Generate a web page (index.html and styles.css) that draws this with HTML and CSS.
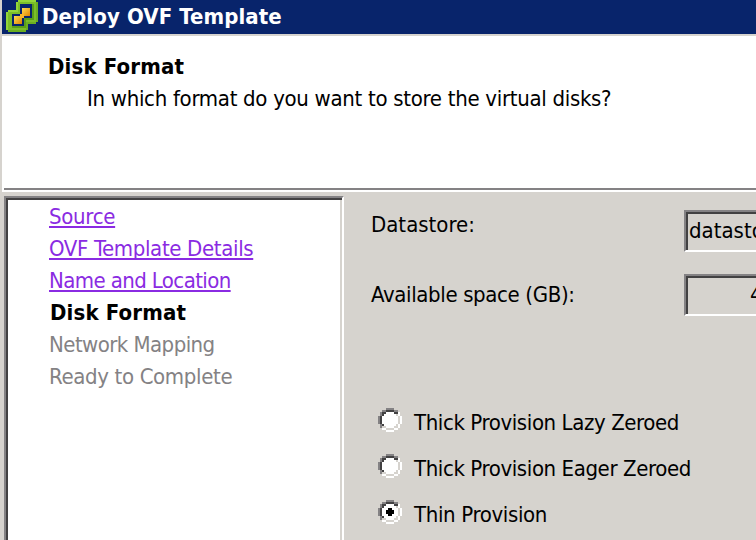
FILE: index.html
```
<!DOCTYPE html>
<html lang="en">
<head>
  <meta charset="UTF-8">
  <title>Deploy OVF Template</title>
  <link rel="stylesheet" href="styles.css">
</head>
<body>
  <div class="window">
    <div class="titlebar">
      <svg class="logo" viewBox="0 0 16 16" width="32" height="32" shape-rendering="crispEdges">
        <defs>
          <linearGradient id="gold" x1="0" y1="0" x2="1" y2="1">
            <stop offset="0" stop-color="#ffdb52"/>
            <stop offset="1" stop-color="#de8200"/>
          </linearGradient>
        </defs>
        <path fill="#6bae21" d="M6 0h9v1h1v10h-1v1h-4v3h-1v1H1v-1H0V6h1V5h4V1h1z"/>
        <path fill="#94d639" d="M6 0h9v1h-9v5H1v9H0V6h1V5h4V1h1z"/>
        <path fill="#7bbe29" d="M6 1h9v10h-5v4H1V6h5z"/>
        <path fill="#5a9e18" d="M7 2h7v8h-4v4H3V7h4z"/>
        <path fill="#08246b" d="M7 2h6v7H9v4H3V7h4z"/>
        <path fill="url(#gold)" d="M8 4h4v4H8z"/>
        <path fill="url(#gold)" d="M4 8h4v4H4z"/>
        <path fill="#f7b629" d="M7 7h2v2H7z"/>
      </svg>
      <span class="title">Deploy OVF Template</span>
    </div>
    <div class="header">
      <h1>Disk Format</h1>
      <p class="question">In which format do you want to store the virtual disks?</p>
    </div>
    <div class="content">
      <ul class="steps">
        <li><a class="source" href="#">Source</a></li>
        <li><a class="details" href="#">OVF Template Details</a></li>
        <li><a class="location" href="#">Name and Location</a></li>
        <li class="current">Disk Format</li>
        <li class="pending mapping">Network Mapping</li>
        <li class="pending ready">Ready to Complete</li>
      </ul>
      <div class="form">
        <div class="row">
          <label class="datastore">Datastore:</label>
          <div class="field">datastore1</div>
        </div>
        <div class="row">
          <label class="space">Available space (GB):</label>
          <div class="field number">4</div>
        </div>
        <div class="options">
          <div class="option">
            <svg class="radio" viewBox="0 0 12 12" width="24" height="24"><use href="#radio"/></svg>
            <span class="lazy">Thick Provision Lazy Zeroed</span>
          </div>
          <div class="option">
            <svg class="radio" viewBox="0 0 12 12" width="24" height="24"><use href="#radio"/></svg>
            <span class="eager">Thick Provision Eager Zeroed</span>
          </div>
          <div class="option">
            <svg class="radio" viewBox="0 0 12 12" width="24" height="24"><use href="#radio"/><path d="M5 4h2v1h1v2H7v1H5V7H4V5h1z"/></svg>
            <span class="thin">Thin Provision</span>
          </div>
        </div>
      </div>
    </div>
  </div>

  <svg width="0" height="0" class="symbols">
    <symbol id="radio" viewBox="0 0 12 12">
      <path fill="#fff" d="M4 2h4v1h1v1h1v4H9v1H8v1H4V9H2V4h1V3h1z"/>
      <path fill="#848284" d="M4 0h4v1H4zM2 1h2v1H2zM8 1h2v1H8zM1 2h1v2H1zM0 4h1v4H0zM1 8h1v2H1z"/>
      <path fill="#424142" d="M4 1h4v1H4zM2 2h2v1H2zM8 2h2v1H8zM2 3h1v1H2zM1 4h1v4H1zM2 8h1v1H2z"/>
      <path fill="#d6d3ce" d="M9 3h1v1H9zM10 4h1v4h-1zM9 8h1v1H9zM8 9h2v1H8zM4 10h4v1H4zM2 9h2v1H2z"/>
      <path fill="#fff" d="M10 2h1v2h-1zM11 4h1v4h-1zM10 8h1v2h-1zM8 10h2v1H8zM2 10h2v1H2zM4 11h4v1H4zM3 3h1v1H3z"/>
    </symbol>
  </svg>
</body>
</html>
```

FILE: styles.css
```
* {
  box-sizing: border-box;
}
body {
  margin: 0;
  overflow: hidden;
  font-family: "DejaVu Sans Condensed", "DejaVu Sans", sans-serif;
  font-stretch: condensed;
  font-size: 22px;
  line-height: 32px;
  color: #000;
  background-color: #d6d3ce;
}
.window {
  width: 756px;
  height: 540px;
  padding-left: 2px;
  overflow: hidden;
  white-space: nowrap;
}
.titlebar {
  display: flex;
  height: 36px;
  padding-left: 4px;
  background-color: #08246b;
  border-bottom: 2px solid #d6d3ce;
  color: #fff;
  font-weight: bold;
}
.title {
  margin: 1px 0 0 4px;
  letter-spacing: 0.1px;
}
.header {
  height: 156px;
  padding: 15px 0 0 2px;
  background-color: #fff;
  display: flex;
  flex-direction: column;
}
.header::after {
  content: "";
  height: 2px;
  margin-top: auto;
  margin-bottom: 2px;
  background-color: #848284;
}
h1 {
  margin: 0 0 0 44px;
  font-size: 22px;
  letter-spacing: 0.15px;
}
.question {
  margin: 0 0 0 83px;
  letter-spacing: -0.3px;
}
.content {
  display: flex;
  padding: 4px 0 0 2px;
}
.steps {
  flex: none;
  width: 340px;
  height: 360px;
  margin: 0;
  padding: 3px 0 0 43px;
  list-style: none;
  background-color: #fff;
  border: 2px solid #848284;
  border-right-color: #fff;
  box-shadow: inset 2px 2px #424142, inset -2px 0 #d6d3ce;
}
.steps a {
  color: #8a2be2;
  text-decoration-thickness: 2px;
  text-decoration-skip-ink: none;
  text-underline-offset: 2px;
}
.source {
  letter-spacing: -0.3px;
}
.details {
  letter-spacing: -0.35px;
}
.location {
  letter-spacing: -0.6px;
}
.current {
  padding-left: 1px;
  font-weight: bold;
  letter-spacing: 0.15px;
}
.pending {
  color: #848284;
}
.mapping {
  letter-spacing: -0.55px;
}
.ready {
  letter-spacing: -0.35px;
}
.form {
  flex: 1;
  padding: 14px 0 0 27px;
}
.row {
  display: flex;
  height: 42px;
  margin-bottom: 22px;
}
.row label {
  flex: none;
  width: 313px;
}
.datastore {
  margin-top: -1px;
}
.space {
  margin-top: 5px;
  letter-spacing: -0.36px;
}
.field {
  flex: none;
  width: 160px;
  height: 42px;
  padding: 3px;
  border: 2px solid #848284;
  border-bottom-color: #fff;
  box-shadow: inset 2px 2px #424142;
}
.number {
  padding-left: 64px;
}
.options {
  padding: 70px 0 0 7px;
}
.option {
  display: flex;
  gap: 12px;
  height: 46px;
}
.option span {
  margin-top: -1px;
}
.lazy {
  letter-spacing: -0.4px;
}
.eager {
  letter-spacing: -0.4px;
}
.thin {
  letter-spacing: -0.35px;
}
.radio {
  shape-rendering: crispEdges;
}
.symbols {
  position: absolute;
}
```
